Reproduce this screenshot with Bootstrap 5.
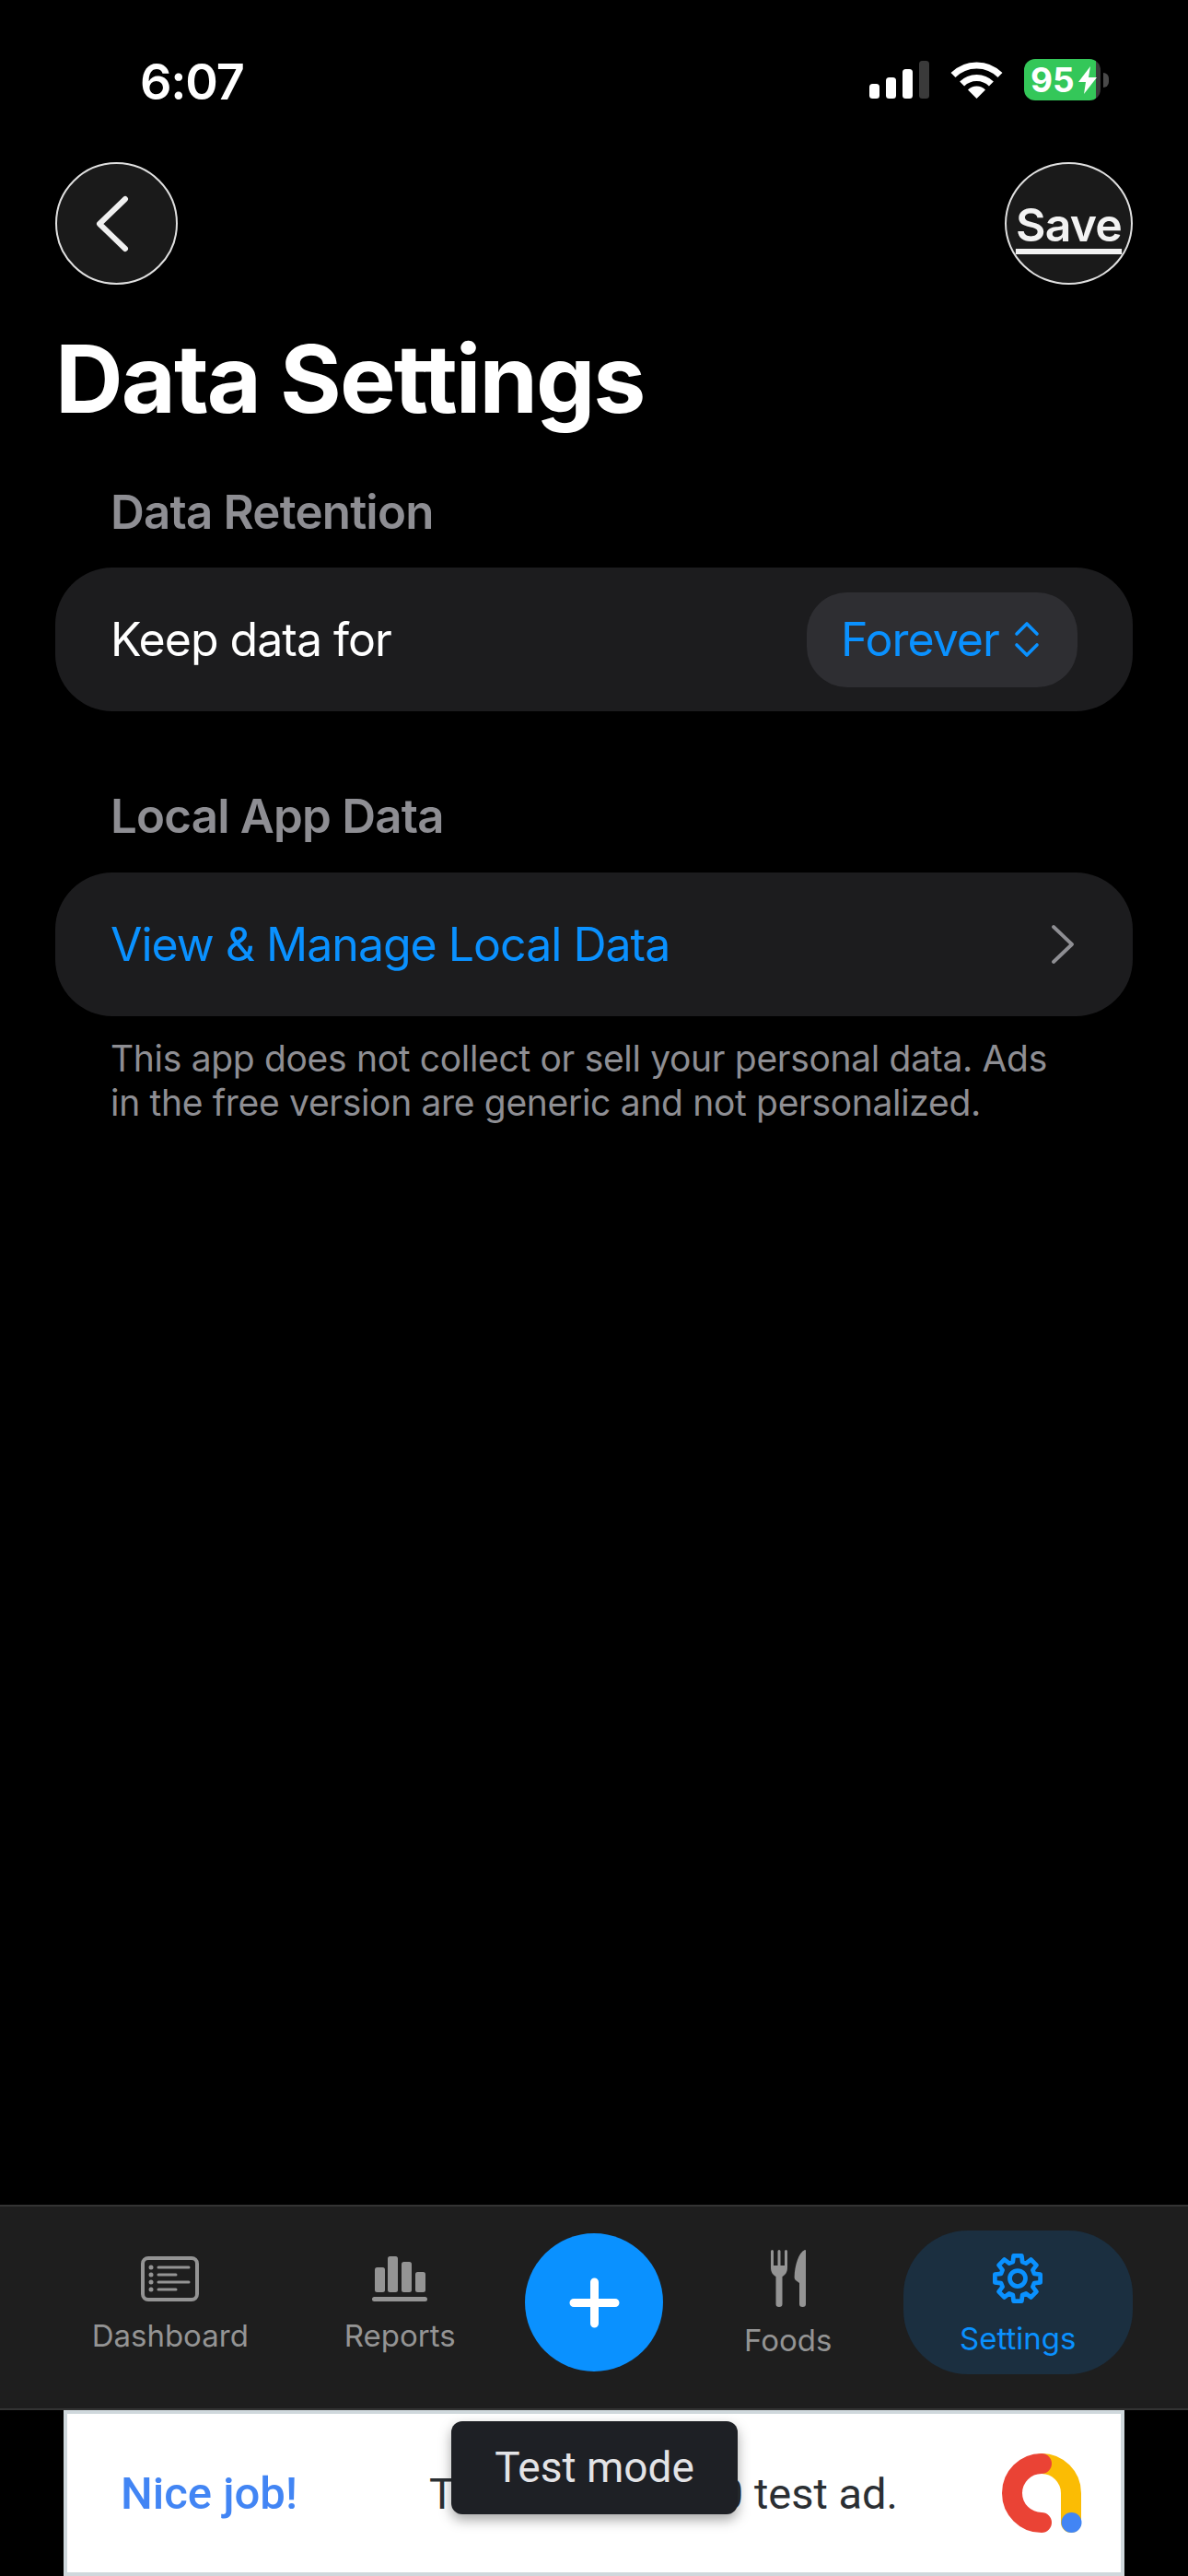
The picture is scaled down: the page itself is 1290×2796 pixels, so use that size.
<!DOCTYPE html>
<html lang="en">
<head>
    <meta charset="UTF-8">
    <meta name="viewport" content="width=device-width, initial-scale=1.0">
    <title>Data Settings</title>
    <link href="https://cdn.jsdelivr.net/npm/bootstrap@5.3.0/dist/css/bootstrap.min.css" rel="stylesheet">
    <style>
        body {
            background-color: #000;
            color: #fff;
            font-family: Inter, "Liberation Sans", sans-serif;
            width: 1290px;
            height: 2796px;
            overflow: hidden;
        }
        .screen { height: 2796px; }

        /* status bar */
        .status-row { height: 176px; padding: 64px 86px 0 152px; }
        .clock { font-size: 54px; font-weight: 600; line-height: 50px; letter-spacing: -1.2px; }
        .status-icons { gap: 23px; height: 45px; }
        .battery-box {
            width: 83px;
            height: 45px;
            border-radius: 12px;
            background: linear-gradient(to right, #34c759 94%, #3a3a3a 94%);
            font-size: 37px;
            font-weight: 700;
            line-height: 45px;
            padding-left: 7px;
        }
        .battery-nub { width: 6px; height: 16px; background: #4a4a4a; border-radius: 0 8px 8px 0; margin-left: -20px; }

        /* header buttons */
        .top-row { padding: 0 60px; }
        .round-btn {
            height: 133px;
            background-color: #1a1a1a;
            border: 2px solid #e0e0e0;
            border-radius: 50%;
            color: #f2f2f2;
            padding: 0;
        }
        .round-btn:hover { background-color: #1a1a1a; color: #f2f2f2; border-color: #e0e0e0; }
        .back-btn { width: 133px; padding-right: 10px; }
        .save-btn {
            width: 139px;
            font-size: 50px;
            font-weight: 600;
            letter-spacing: -0.8px;
            padding-top: 3px;
            text-decoration: underline;
            text-decoration-thickness: 6px;
            text-underline-offset: 8px;
        }

        .page-title {
            font-family: Inter, sans-serif;
            font-size: 102px;
            font-weight: 700;
            line-height: 120px;
            letter-spacing: -2px;
            margin: 42px 0 0 60px;
        }

        .section-label {
            font-size: 51px;
            font-weight: 600;
            line-height: 62px;
            letter-spacing: -0.8px;
            color: #8e8e93;
            margin: 0 0 0 120px;
        }
        .setting-card {
            background-color: #1c1c1e;
            border: 0;
            border-radius: 62px;
            height: 156px;
            margin: 0 60px;
            padding: 0 60px 0 60px;
            font-size: 50px;
            letter-spacing: -1px;
        }
        .picker-pill {
            background-color: #2e2e32;
            border-radius: 44px;
            height: 103px;
            width: 294px;
            padding-left: 37px;
            gap: 16px;
            color: #0a91ff;
        }
        .blue-link { color: #0a91ff; }
        .row-arrow { margin-right: 3px; }
        .note-text {
            font-size: 39px;
            line-height: 48px;
            color: #8e8e93;
            margin: 22px 0 0 120px;
            max-width: 1050px;
            letter-spacing: -0.32px;
        }

        /* tab bar */
        .tab-bar {
            height: 223px;
            background-color: #1e1e1e;
            border-top: 2px solid #333;
            border-bottom: 2px solid #333;
            padding: 26px 60px 0;
        }
        .tab-item {
            flex: 1 1 0;
            height: 156px;
            color: #949494;
            font-size: 33px;
            line-height: 40px;
        }
        .tab-dash { padding-top: 28px; }
        .tab-dash .tab-text { margin-top: 17px; }
        .tab-food { padding-top: 21px; }
        .tab-food .tab-text { margin-top: 16px; }
        .tab-active {
            padding-top: 22px;
            color: #0a91ff;
            background-color: #1b2f40;
            border-radius: 70px;
        }
        .tab-active .tab-text { margin-top: 15px; }
        .add-btn {
            width: 150px;
            height: 150px;
            margin: 3px 11px 0;
            padding: 0;
            border: 0;
            background-color: #0a91ff;
        }
        .add-btn:hover { background-color: #0a91ff; }

        /* test ad */
        .ad-box {
            height: 180px;
            margin: 0 69px;
            background-color: #fff;
            border: 4px solid #cfd8dc;
            position: relative;
        }
        .ad-head {
            font-family: Roboto, sans-serif;
            font-size: 49px;
            font-weight: 500;
            color: #4285f4;
            margin-left: 58px;
            margin-top: 2px;
            width: 335px;
        }
        .ad-copy {
            font-family: Roboto, sans-serif;
            font-size: 47px;
            margin-top: 2px;
            color: #2b2f33;
        }
        .test-toast {
            position: absolute;
            left: 417px;
            top: 8px;
            width: 311px;
            height: 101px;
            background-color: #1e2025;
            border-radius: 12px;
            color: #e3e3e6;
            font-family: Roboto, sans-serif;
            font-size: 46px;
            box-shadow: 0 6px 14px rgba(0, 0, 0, 0.35);
        }
        .ad-logo { margin-right: 42px; }
    </style>
</head>
<body>
    <div class="screen d-flex flex-column">
        <!-- status bar -->
        <div class="status-row d-flex justify-content-between align-items-start">
            <div class="clock">6:07</div>
            <div class="status-icons d-flex align-items-center">
                <svg width="65" height="41" viewBox="0 0 65 41" fill="#fff">
                    <rect x="0" y="25" width="11" height="16" rx="3.5"/>
                    <rect x="18" y="18" width="11" height="23" rx="3.5"/>
                    <rect x="36" y="9" width="11" height="32" rx="3.5"/>
                    <rect x="54" y="0" width="11" height="41" rx="3.5" fill="#3a3a3a"/>
                </svg>
                <svg width="57" height="40" viewBox="0 0 57 40" fill="none" stroke="#fff" stroke-width="7">
                    <path d="M3 14.5A36 36 0 0 1 54 14.5"/>
                    <path d="M12.6 24.1A22.5 22.5 0 0 1 44.4 24.1"/>
                    <path d="M28.5 40L19 30.5A13.4 13.4 0 0 1 38 30.5Z" fill="#fff" stroke="none"/>
                </svg>
                <div class="battery-box d-flex align-items-center">95<svg width="20" height="30" viewBox="0 0 20 30" fill="#fff" class="ms-1"><path d="M13 0L0 17h8L6 30 20 12h-9z"/></svg></div>
                <div class="battery-nub"></div>
            </div>
        </div>

        <!-- header -->
        <div class="top-row d-flex justify-content-between">
            <button class="btn round-btn back-btn d-flex align-items-center justify-content-center" type="button" aria-label="Back">
                <svg width="38" height="62" viewBox="0 0 38 62" fill="none" stroke="#f0f0f0" stroke-width="6" stroke-linecap="round" stroke-linejoin="round"><path d="M33 4L5 31l28 27"/></svg>
            </button>
            <button class="btn round-btn save-btn" type="button">Save</button>
        </div>

        <h1 class="page-title mb-0">Data Settings</h1>

        <!-- data retention -->
        <h2 class="section-label" style="margin-top: 54px; margin-bottom: 29px;">Data Retention</h2>
        <div class="card setting-card flex-row align-items-center justify-content-between">
            <span>Keep data for</span>
            <div class="picker-pill d-flex align-items-center">
                <span>Forever</span>
                <svg width="28" height="40" viewBox="0 0 28 40" fill="none" stroke="#0a91ff" stroke-width="3.6" stroke-linecap="round" stroke-linejoin="round"><path d="M3 14L14 3l11 11"/><path d="M3 26l11 11 11-11"/></svg>
            </div>
        </div>

        <!-- local data -->
        <h2 class="section-label" style="margin-top: 83px; margin-bottom: 30px;">Local App Data</h2>
        <div class="card setting-card flex-row align-items-center justify-content-between">
            <span class="blue-link">View &amp; Manage Local Data</span>
            <svg class="row-arrow" width="26" height="44" viewBox="0 0 26 44" fill="none" stroke="#8e8e93" stroke-width="3.8" stroke-linecap="round" stroke-linejoin="round"><path d="M3 3l20 19L3 41"/></svg>
        </div>
        <p class="note-text mb-0">This app does not collect or sell your personal data. Ads in the free version are generic and not personalized.</p>

        <!-- tab bar -->
        <nav class="tab-bar d-flex mt-auto">
            <div class="tab-item tab-dash d-flex flex-column align-items-center">
                <svg width="63" height="49" viewBox="0 0 63 49" fill="none" stroke="#949494">
                    <rect x="2" y="2" width="59" height="45" rx="6" stroke-width="4"/>
                    <g stroke-width="3" stroke-linecap="round">
                        <path d="M19 12h33M19 20h19M19 28h33M19 36h19"/>
                    </g>
                    <g fill="#949494" stroke="none">
                        <circle cx="11" cy="12" r="2.5"/><circle cx="11" cy="20" r="2.5"/><circle cx="11" cy="28" r="2.5"/><circle cx="11" cy="36" r="2.5"/>
                    </g>
                </svg>
                <span class="tab-text">Dashboard</span>
            </div>
            <div class="tab-item tab-dash d-flex flex-column align-items-center">
                <svg width="60" height="49" viewBox="0 0 60 49" fill="#949494">
                    <rect x="3" y="12" width="11" height="27" rx="2.5"/>
                    <rect x="17" y="0" width="11" height="39" rx="2.5"/>
                    <rect x="32" y="6" width="11" height="33" rx="2.5"/>
                    <rect x="47" y="17" width="11" height="22" rx="2.5"/>
                    <rect x="0" y="44" width="60" height="5" rx="2.5"/>
                </svg>
                <span class="tab-text">Reports</span>
            </div>
            <button class="btn add-btn rounded-circle d-flex align-items-center justify-content-center" type="button" aria-label="Add">
                <svg width="55" height="55" viewBox="0 0 55 55" fill="none" stroke="#fff" stroke-width="9" stroke-linecap="round"><path d="M27.5 5v45M5 27.5h45"/></svg>
            </button>
            <div class="tab-item tab-food d-flex flex-column align-items-center">
                <svg width="38" height="62" viewBox="0 0 38 62" fill="#949494">
                    <path d="M0 1.5a1.5 1.5 0 0 1 3 0V17h4.500V1.5a1.5 1.5 0 0 1 3 0V17H15V1.5a1.5 1.5 0 0 1 3 0V19c0 5-2 8-5.500 10V59a3.500 3 0 0 1-7 0V29C2 27 0 24 0 19z"/>
                    <path d="M37 0c.6 0 1 .5 1 1V59a3.500 3 0 0 1-7 0V36l-4-3c-1-.8-1.400-2-1.400-3.500C26 17 30 3 37 0z"/>
                </svg>
                <span class="tab-text">Foods</span>
            </div>
            <div class="tab-item tab-active d-flex flex-column align-items-center">
                <svg width="60" height="60" viewBox="0 0 24 24" fill="none" stroke="#0a91ff" stroke-width="1.9" stroke-linejoin="round">
                    <path d="M9.93 4.79L10.26 2.15H13.74L14.07 4.79L15.64 5.44L17.74 3.81L20.19 6.26L18.56 8.36L19.21 9.93L21.85 10.26V13.74L19.21 14.07L18.56 15.64L20.19 17.74L17.74 20.19L15.64 18.56L14.07 19.21L13.74 21.85H10.26L9.93 19.21L8.36 18.56L6.26 20.19L3.81 17.74L5.44 15.64L4.79 14.07L2.15 13.74V10.26L4.79 9.93L5.44 8.36L3.81 6.26L6.26 3.81L8.36 5.44Z"/>
                    <circle cx="12" cy="12" r="3.400"/>
                </svg>
                <span class="tab-text">Settings</span>
            </div>
        </nav>

        <!-- test ad -->
        <div class="ad-box d-flex align-items-center">
            <span class="ad-head">Nice job!</span>
            <span class="ad-copy">This is a 320x50 test ad.</span>
            <svg class="ad-logo ms-auto" width="87" height="86" viewBox="0 0 87 86" fill="none" stroke-width="22" stroke-linecap="round">
                <path d="M43 11A32 32 0 0 1 75 43V75" stroke="#fbbc04"/>
                <path d="M43 11A32 32 0 0 0 43 75" stroke="#ea4335"/>
                <circle cx="75.500" cy="75" r="11" fill="#4285f4" stroke="none"/>
            </svg>
            <div class="test-toast d-flex align-items-center justify-content-center">Test mode</div>
        </div>
    </div>
    <script src="https://cdn.jsdelivr.net/npm/bootstrap@5.3.0/dist/js/bootstrap.bundle.min.js"></script>
</body>
</html>
